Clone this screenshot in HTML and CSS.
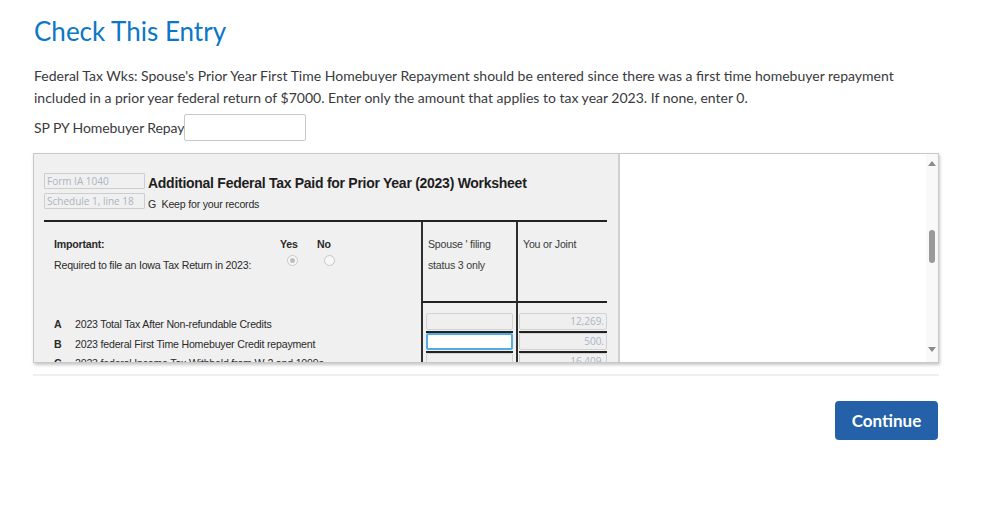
FILE: index.html
```html
<!DOCTYPE html>
<html lang="en">
<head>
<meta charset="utf-8">
<title>Check This Entry</title>
<link rel="stylesheet" href="styles.css">
</head>
<body>
<main class="page">
  <h1 class="title">Check This Entry</h1>
  <p class="msg">Federal Tax Wks: Spouse's Prior Year First Time Homebuyer Repayment should be entered since there was a first time homebuyer repayment included in a prior year federal return of $7000. Enter only the amount that applies to tax year 2023. If none, enter 0.</p>
  <div class="field">
    <label class="field-label" for="sp">SP PY Homebuyer Repay</label>
    <input class="field-input" id="sp" type="text">
  </div>

  <div class="frame">
    <div class="doc">
      <div class="doc-head">
        <div class="refs">
          <span class="ref">Form IA 1040</span>
          <span class="ref">Schedule 1, line 18</span>
        </div>
        <div class="heading">
          <div class="ws-title">Additional Federal Tax Paid for Prior Year (2023) Worksheet</div>
          <div class="ws-sub">G&nbsp; Keep for your records</div>
        </div>
      </div>

      <div class="ws-grid">
        <div class="lead">
          <span class="strong">Important:</span>
          <span class="strong">Yes</span>
          <span class="strong">No</span>
          <span>Required to file an Iowa Tax Return in 2023:</span>
          <span class="radio checked"></span>
          <span class="radio"></span>
        </div>
        <div class="colhead col">Spouse ' filing<br>status 3 only</div>
        <div class="colhead col last">You or Joint</div>

        <div class="lines">
          <div class="line"><span class="strong">A</span><span>2023 Total Tax After Non-refundable Credits</span></div>
          <div class="line"><span class="strong">B</span><span>2023 federal First Time Homebuyer Credit repayment</span></div>
          <div class="line"><span class="strong">C</span><span>2023 federal Income Tax Withheld from W-2 and 1099s</span></div>
        </div>
        <div class="col slots">
          <div class="slot"><div class="box"></div></div>
          <div class="slot"><div class="box focus"></div></div>
          <div class="slot"><div class="box"></div></div>
        </div>
        <div class="col last slots">
          <div class="slot"><div class="box">12,269.</div></div>
          <div class="slot"><div class="box">500.</div></div>
          <div class="slot"><div class="box">16,409.</div></div>
        </div>
      </div>
    </div>
    <div class="viewer"></div>
    <div class="scrollbar">
      <span class="arrow up"></span>
      <span class="thumb"></span>
      <span class="arrow down"></span>
    </div>
  </div>

  <hr class="divider">
  <div class="actions">
    <button class="btn" type="button">Continue</button>
  </div>
</main>
</body>
</html>
```

FILE: styles.css
```css
* { box-sizing: border-box; }

html, body {
  margin: 0;
  padding: 0;
  background: #ffffff;
}

body {
  font-family: Lato, "Open Sans", sans-serif;
  color: #393a3d;
}

.page {
  width: 906px;
  margin-left: 33px;
  padding-top: 15px;
}

.title {
  margin: 0 0 0 1px;
  font-size: 26px;
  line-height: 32px;
  font-weight: 400;
  color: #0b77c5;
}

.msg {
  margin: 18px 0 0 1px;
  max-width: 870px;
  font-size: 14px;
  line-height: 22px;
}

.field {
  display: flex;
  align-items: center;
  margin-top: 5px;
  margin-left: 1px;
  height: 27px;
}

.field-label {
  font-size: 14px;
  letter-spacing: -0.1px;
}

.field-input {
  width: 122px;
  height: 27px;
  margin: 0;
  border: 1px solid #c9c9c9;
  border-radius: 2px;
  background: #fff;
}

/* Embedded worksheet frame */
.frame {
  margin-top: 12px;
  height: 210px;
  display: flex;
  border: 1px solid #c8c8c8;
  box-shadow: 1px 2px 3px rgba(0, 0, 0, 0.22);
  overflow: hidden;
}

.doc {
  width: 586px;
  flex: none;
  background: #f0f0f0;
  border-right: 2px solid #d0d0d0;
  padding: 19px 0 0 10px;
  font-family: "Liberation Sans", Arial, sans-serif;
  font-size: 10.6px;
  letter-spacing: -0.2px;
  font-variant-ligatures: none;
  color: #2a2a2a;
  overflow: hidden;
}

.doc-head {
  display: flex;
  gap: 3px;
  height: 47px;
}

.refs {
  display: flex;
  flex-direction: column;
  gap: 4px;
}

.ref {
  width: 101px;
  height: 16px;
  border: 1px solid #cdcdcd;
  border-radius: 1px;
  padding-left: 2px;
  font-family: "Open Sans", sans-serif;
  font-size: 10px;
  letter-spacing: 0;
  line-height: 14px;
  color: #aab5c1;
}

.ws-title {
  font-size: 14px;
  font-weight: 700;
  letter-spacing: -0.27px;
  line-height: 20px;
  color: #1e1e1e;
}

.ws-sub {
  margin-top: 3px;
  line-height: 16px;
}

.ws-grid {
  width: 563px;
  display: grid;
  grid-template-columns: 377px 95px 91px;
  grid-template-rows: 81px auto;
  border-top: 2px solid #222;
}

.strong { font-weight: 700; }

.lead {
  display: grid;
  grid-template-columns: 207px 18px 18px;
  grid-template-rows: 21px 21px;
  column-gap: 19px;
  padding: 12px 0 0 10px;
  line-height: 21px;
}

.radio {
  justify-self: end;
  width: 11px;
  height: 11px;
  border: 1px solid #c8c8c8;
  border-radius: 50%;
  background: #f7f7f7;
  position: relative;
}

.radio.checked::after {
  content: "";
  position: absolute;
  left: 2px;
  top: 2px;
  width: 5px;
  height: 5px;
  border-radius: 50%;
  background: #bdbdbd;
}

.col {
  border-left: 2px solid #2e2e2e;
}

.colhead {
  border-bottom: 2px solid #222;
  padding: 12px 0 0 5px;
  line-height: 21px;
  color: #3a3a3a;
}

.lines {
  padding: 12px 0 0 10px;
}

.line {
  display: grid;
  grid-template-columns: 21px auto;
  line-height: 19.5px;
  white-space: nowrap;
}

.slots {
  padding: 10px 3px 0 3px;
}

.slots.last {
  padding: 10px 0 0 1px;
}

.slot {
  padding-bottom: 1px;
  border-bottom: 2px solid #222;
}

.box {
  height: 17px;
  border: 1px solid #d2d2d2;
  border-radius: 2px;
  background: #efefef;
  text-align: right;
  padding-right: 2px;
  font-family: "Open Sans", sans-serif;
  font-size: 10px;
  letter-spacing: 0;
  line-height: 15px;
  color: #a8b6c6;
}

.box.focus {
  background: #ffffff;
  border: 2px solid #52ace3;
}

.viewer {
  flex: 1;
  background: #ffffff;
}

.scrollbar {
  width: 12px;
  flex: none;
  background: #f9f9f9;
  display: flex;
  flex-direction: column;
  align-items: center;
  padding-top: 7px;
}

.arrow {
  width: 0;
  height: 0;
  border-left: 4px solid transparent;
  border-right: 4px solid transparent;
}

.arrow.up {
  border-bottom: 5px solid #8c8c8c;
}

.arrow.down {
  margin-top: 84px;
  border-top: 5px solid #8c8c8c;
}

.thumb {
  margin-top: 64px;
  width: 6px;
  height: 33px;
  border-radius: 3px;
  background: #9a9a9a;
}

.divider {
  margin: 11px 0 0 0;
  border: 0;
  height: 2px;
  background: #efefef;
}

.actions {
  display: flex;
  justify-content: flex-end;
  margin-top: 25px;
  padding-right: 1px;
}

.btn {
  width: 103px;
  height: 39px;
  border: 0;
  border-radius: 4px;
  background: #2461a8;
  color: #ffffff;
  font-family: Lato, "Open Sans", sans-serif;
  font-size: 17px;
  font-weight: 700;
}
```
